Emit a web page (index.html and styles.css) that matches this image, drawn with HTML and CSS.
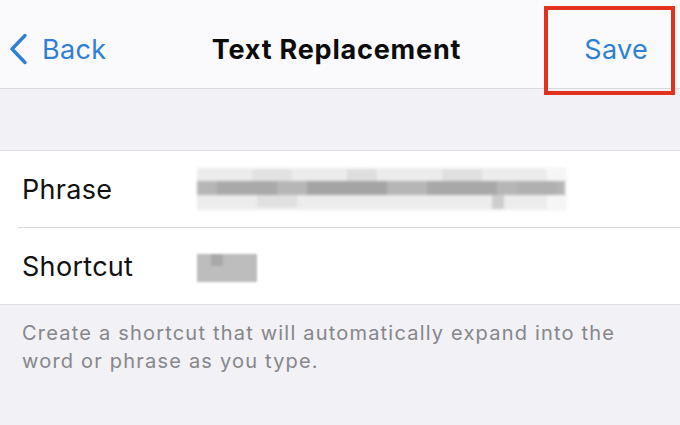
FILE: index.html
```html
<!DOCTYPE html>
<html>
<head>
    <title>Text Replacement</title>
    <link rel="stylesheet" href="styles.css">
</head>
<body>
    <div class="navBar">
        <div class="backBtn">
            <svg class="chevron" width="22" height="32" viewBox="0 0 22 32">
                <path d="M18 2.5 L5 16 L18 29.5" fill="none" stroke="#2f7fd4" stroke-width="3.4" stroke-linecap="round" stroke-linejoin="round"/>
            </svg>
            <span class="blue">Back</span>
        </div>
        <div class="title">Text Replacement</div>
        <div class="saveBtn blue">Save</div>
        <div class="highlight"></div>
    </div>
    <div class="spacer"></div>
    <div class="group">
        <div class="row">
            <span class="label">Phrase</span>
            <svg class="blurred" width="370" height="44" viewBox="0 0 370 44">
                <rect x="0" y="0" width="370" height="44" fill="#f6f6f6"/>
                <rect x="0" y="2" width="350" height="40" fill="#ececec"/>
                <rect x="55" y="2" width="40" height="12" fill="#e2e2e2"/>
                <rect x="150" y="2" width="30" height="12" fill="#dedede"/>
                <rect x="245" y="2" width="40" height="12" fill="#e0e0e0"/>
                <rect x="0" y="14" width="368" height="14" fill="#b6b6b6"/>
                <rect x="20" y="14" width="60" height="14" fill="#a9a9a9"/>
                <rect x="110" y="14" width="80" height="14" fill="#a4a4a4"/>
                <rect x="230" y="14" width="70" height="14" fill="#a8a8a8"/>
                <rect x="320" y="14" width="40" height="14" fill="#b0b0b0"/>
                <rect x="60" y="28" width="40" height="12" fill="#e0e0e0"/>
                <rect x="295" y="28" width="12" height="14" fill="#cdcdcd"/>
            </svg>
        </div>
        <div class="separator"></div>
        <div class="row">
            <span class="label">Shortcut</span>
            <svg class="blurredSmall" width="60" height="28" viewBox="0 0 60 28">
                <rect x="0" y="0" width="60" height="28" fill="#bdbdbd"/>
                <rect x="14" y="0" width="12" height="12" fill="#a9a9a9"/>
            </svg>
        </div>
    </div>
    <p class="footer">Create a shortcut that will automatically expand into the word or phrase as you type.</p>
</body>
</html>
```

FILE: styles.css
```css
body{
    margin: 0px;
    width: 680px;
    height: 425px;
    background-color: #f1f1f6;
    font-family: Inter, "Noto Sans", sans-serif;
    overflow: hidden;
}

.navBar{
    position: relative;
    display: flex;
    align-items: center;
    justify-content: space-between;
    height: 78px;
    padding: 10px 32px 0px 7px;
    background-color: #fafafc;
    border-bottom: 1px solid #d9d9de;
}

.backBtn{
    display: flex;
    align-items: center;
    gap: 13px;
    width: 170px;
}

.blue{
    color: #2f7fd4;
    font-size: 27px;
    letter-spacing: 0.3px;
}

.title{
    font-size: 27px;
    font-weight: 700;
    letter-spacing: 0.8px;
    color: #0c0c0c;
    margin-left: 18px;
}

.saveBtn{
    width: 170px;
    text-align: right;
}

.highlight{
    position: absolute;
    left: 544px;
    top: 6px;
    width: 123px;
    height: 81px;
    border: 4px solid #e2311d;
}

.spacer{
    height: 61px;
}

.group{
    background-color: #ffffff;
    border-top: 1px solid #dfdfe4;
    border-bottom: 1px solid #dfdfe4;
}

.row{
    display: flex;
    align-items: center;
    height: 76px;
    padding-left: 22px;
}

.label{
    width: 175px;
    font-size: 27px;
    letter-spacing: 0.3px;
    color: #111111;
}

.blurred{
    filter: blur(1.5px);
}

.blurredSmall{
    filter: blur(1px);
    margin-top: 4px;
}

.separator{
    height: 1px;
    margin-left: 18px;
    background-color: #dcdce0;
}

.footer{
    margin: 14px 40px 0px 22px;
    font-size: 20px;
    line-height: 28px;
    letter-spacing: 1.2px;
    color: #86868b;
}
```
